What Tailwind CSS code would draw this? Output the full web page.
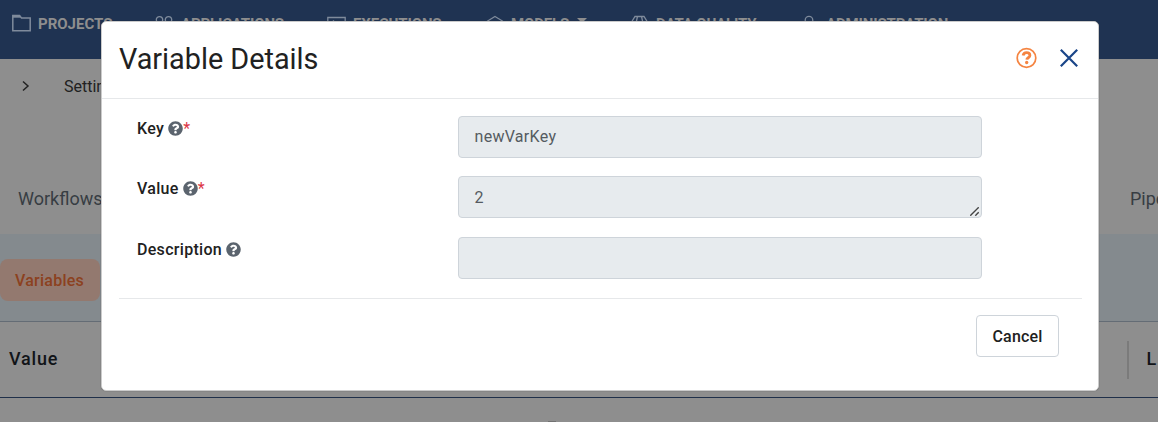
<!DOCTYPE html>
<html lang="en">
<head>
<meta charset="utf-8">
<title>Variable Details</title>
<script src="https://cdn.jsdelivr.net/npm/@tailwindcss/browser@4"></script>
</head>
<body class="relative h-[422px] w-[1158px] overflow-hidden bg-[#8e8e8e] font-['Roboto',sans-serif] text-base text-[#212121]">
<svg class="hidden">
  <symbol id="help" viewBox="0 0 512 512"><path d="M504 256c0 137-111 248-248 248S8 393 8 256 119 8 256 8s248 111 248 248zM262.700 90c-54.500 0-89.300 23-116.500 63.800-3.500 5.300-2.400 12.400 2.700 16.300l34.700 26.300c5.200 3.900 12.600 3 16.700-2.100 17.900-22.700 30.100-35.800 57.300-35.800 20.400 0 45.700 13.100 45.700 33 0 15-12.400 22.700-32.500 34C247.100 238.500 216 254.900 216 296v4c0 6.600 5.400 12 12 12h56c6.600 0 12-5.400 12-12v-1.300c0-28.500 83.200-29.600 83.200-106.700 0-58-60.200-102-116.500-102zM256 338c-25.400 0-46 20.600-46 46s20.600 46 46 46 46-20.600 46-46-20.600-46-46-46z"/></symbol>
</svg>
<div>
  <nav class="h-[59px] bg-[#1f3352] text-[15px] font-bold leading-5 tracking-[-0.01em] text-[#8e8e8e]">
    <ul class="flex pt-[14px] pl-3">
      <li class="flex w-[143px] shrink-0 gap-[7px]">
        <svg class="h-[18px] w-[19px]" viewBox="0 0 19 18" fill="none" stroke="#7f8b9c" stroke-width="1.500"><path d="M.8 16.700V1.500H7.500L9.500 4H18.200V16.700Z"/><path d="M1 2.700H8.500" stroke-width="2"/></svg>
        <span class="tracking-normal">PROJECTS</span></li>
      <li class="flex w-[172px] shrink-0 gap-[8px]">
        <svg class="mt-px h-[18px] w-[18px]" viewBox="0 0 18 18" fill="none" stroke="#7f8b9c" stroke-width="1.300"><circle cx="4.500" cy="4.800" r="3.200"/><circle cx="13.500" cy="4.800" r="3.200"/><circle cx="4.500" cy="13.500" r="3.200"/><circle cx="13.500" cy="13.500" r="3.200"/></svg>
        <span>APPLICATIONS</span></li>
      <li class="flex w-[159px] shrink-0 gap-[7px]">
        <svg class="mt-[2px] h-[18px] w-[19px]" viewBox="0 0 19 18" fill="none" stroke="#7f8b9c" stroke-width="1.300"><path d="M.8 1.500H18.200V15.500H.8ZM7 4.500L4 7L7 9.500"/></svg>
        <span>EXECUTIONS</span></li>
      <li class="flex w-[144px] shrink-0 gap-[7px]">
        <svg class="mt-px h-[18px] w-[18px]" viewBox="0 0 18 18" fill="none" stroke="#7f8b9c" stroke-width="1.300"><path d="M9 1.500L16.500 6V13.500L9 17L1.500 13.500V6ZM1.500 6L9 10L16.500 6M9 10V17"/></svg>
        <span class="flex">MODELS<svg class="ml-2 h-5 w-[10px]" viewBox="0 0 10 20" fill="#8e8e8e"><path d="M0 4H10L5 9Z"/></svg></span></li>
      <li class="flex w-[171px] shrink-0 gap-[7px]">
        <svg class="mt-px h-[18px] w-[19px]" viewBox="0 0 19 18" fill="none" stroke="#7f8b9c" stroke-width="1.300"><path d="M5 1.500H14L18 8L14 16.500H5L1 8ZM7.500 1.500L6 8L7.500 16.500M11.500 1.500L13 8L11.500 16.500M1 8H18"/></svg>
        <span>DATA QUALITY</span></li>
      <li class="flex shrink-0 gap-[8px]">
        <svg class="mt-px h-[18px] w-[17px]" viewBox="0 0 17 18" fill="none" stroke="#7f8b9c" stroke-width="1.300"><circle cx="8" cy="5.200" r="3.800"/><path d="M1 17C1 12 4 10.500 8 10.500S15 12 15 17"/></svg>
        <span>ADMINISTRATION</span></li>
    </ul>
  </nav>
  <div class="flex h-[55px] items-center gap-[34px] pl-[21px]">
    <svg class="-mt-0.5 h-3 w-[9px]" viewBox="0 0 9 12" fill="none" stroke="#222" stroke-width="1.500"><path d="M2 1.500L7 6L2 10.500"/></svg>
    <span>Settings</span>
  </div>
  <div class="flex h-[120px] justify-between pt-[71px] pl-[18px] text-lg text-[#373d43]">
    <span>Workflows</span><span class="w-7 overflow-hidden whitespace-nowrap">Pipelines</span>
  </div>
  <div class="flex h-[88px] items-start border-b border-[#646c75] bg-[#848a8e] pt-[25px]">
    <span class="flex h-[42px] w-[100px] items-center rounded-lg bg-[#93796f] pt-0.5 pl-[15px] font-medium tracking-[0.25px] text-[#8c4120]">Variables</span>
  </div>
  <div class="flex h-[76px] items-center justify-between border-b border-[#20304a] pl-[9px] text-lg font-medium text-[#111418]">
    <span class="pb-0.5 tracking-[0.8px]">Value</span>
    <span class="flex h-[38px] w-[31px] items-center overflow-hidden border-l-2 border-[#7b7b7b] pb-0.5 pl-[17.500px] tracking-[0.8px] whitespace-nowrap"><span>L</span></span>
  </div>
  <div class="flex h-6 justify-center pt-[23px] pr-[54px]"><div class="h-px w-2 bg-[#727272]"></div></div>
</div>

<section class="absolute top-[21px] left-[101px] h-[370px] w-[998px] rounded-[5px] border border-[#cbcbcb] bg-white shadow-[0_0_1px_rgba(0,0,0,0.5)]" role="dialog">
  <header class="flex h-[77px] items-center border-b border-[#e6e8ea] pl-[17px] pr-[20.500px] pb-1">
    <h1 class="flex-1 pt-0.5 text-[28.800px] leading-9">Variable Details</h1>
    <svg class="mr-[22px] h-[22px] w-[22px]" viewBox="0 0 22 22"><circle cx="10.500" cy="11" r="9.300" fill="none" stroke="#f58441" stroke-width="1.700"/><path d="M7.100 8.600C7.500 6.500 8.700 5.600 10.500 5.600C12.500 5.600 13.900 6.700 13.900 8.400C13.900 10.700 10.900 10.700 10.800 12.600" fill="none" stroke="#f58441" stroke-width="2.800"/><circle cx="10.700" cy="15.500" r="1.650" fill="#f58441"/></svg>
    <svg class="h-[18px] w-[18px]" viewBox="0 0 18 18" fill="none" stroke="#1a4588" stroke-width="2.200"><path d="M.8.8L17.200 17.200M17.200.8L.8 17.200"/></svg>
  </header>
  <div class="mr-4 ml-[17px] h-[200px] border-b border-[#e6e8ea] px-[18px] pt-[17px]">
    <div class="flex h-[60px]">
      <label class="flex w-[321px] font-medium leading-[26px] tracking-[0.3px]">Key<svg class="ml-1 mt-[5px] h-[15px] w-[15px]" fill="#5b646e"><use href="#help"/></svg><span class="font-normal text-[#dc3545]">*</span></label>
      <div class="h-[42px] w-[524px] rounded border border-[#ced4da] bg-[#e7ebee] px-[15.500px] py-2 leading-6 tracking-[0.3px] text-[#555b61]">newVarKey</div>
    </div>
    <div class="flex h-[61px]">
      <label class="flex w-[321px] font-medium leading-[26px] tracking-[0.3px]">Value<svg class="ml-1 mt-[5px] h-[15px] w-[15px]" fill="#5b646e"><use href="#help"/></svg><span class="font-normal text-[#dc3545]">*</span></label>
      <div class="flex h-[42px] w-[524px] items-end justify-between rounded border border-[#ced4da] bg-[#e7ebee] pr-0.5 pb-px pl-[15.500px] leading-6 text-[#555b61]"><span class="pb-[6px]">2</span><svg class="h-[9px] w-[9px]" viewBox="0 0 9 9" fill="none" stroke="#fff" stroke-width="1"><path d="M1.500 9L9 1.500M6.500 9L9 6.500"/><path stroke="#444" d="M.3 8.700L8.700.3M5.300 8.700L8.700 5.300" stroke-width="1.400"/></svg></div>
    </div>
    <div class="flex">
      <label class="flex w-[321px] font-medium leading-[26px] tracking-[0.3px]">Description<svg class="ml-1 mt-[5px] h-[15px] w-[15px]" fill="#5b646e"><use href="#help"/></svg></label>
      <div class="h-[42px] w-[524px] rounded border border-[#ced4da] bg-[#e7ebee]"></div>
    </div>
  </div>
  <footer class="flex justify-end pt-4 pr-[39px]">
    <button class="h-[42px] w-[83px] rounded border border-[#ced4da] pt-0.5 font-medium tracking-[0.200px]">Cancel</button>
  </footer>
</section>
</body>
</html>
